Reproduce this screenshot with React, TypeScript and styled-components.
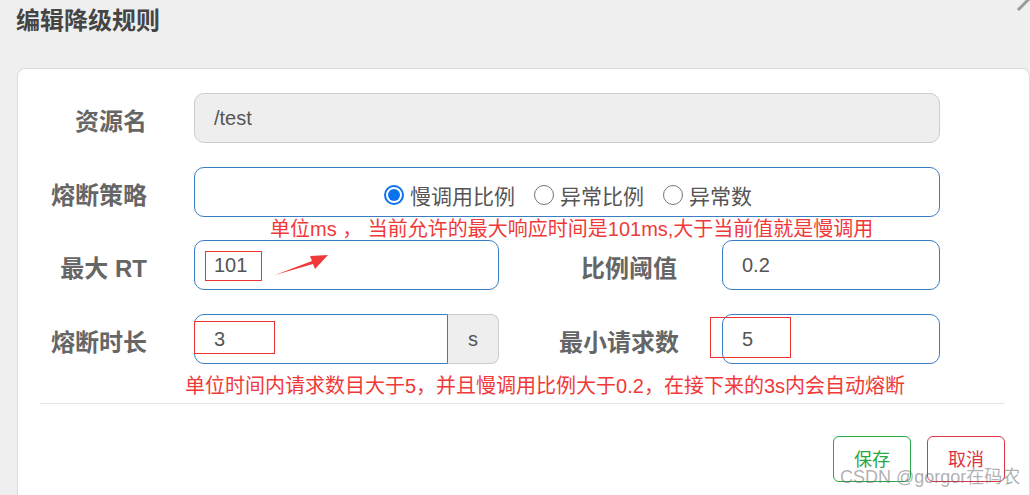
import React from "react";
import styled, { createGlobalStyle } from "styled-components";

const GlobalStyle = createGlobalStyle`
  html, body {
    margin: 0;
    padding: 0;
    background: #efefef;
    font-family: "Liberation Sans", "Noto Sans CJK SC", sans-serif;
  }
  * { box-sizing: border-box; }
`;

const Page = styled.div`
  position: relative;
  width: 1030px;
  height: 495px;
  overflow: hidden;
  background: #efefef;
`;

const Header = styled.div`
  height: 68px;
  padding-left: 16px;
`;

const Title = styled.h1`
  margin: 0;
  font-size: 24px;
  line-height: 38px;
  font-weight: 700;
  color: #454545;
  font-family: "Noto Sans CJK SC", sans-serif;
`;

const Close = styled.svg`
  position: absolute;
  right: 0;
  top: 0;
`;

const Card = styled.div`
  margin-left: 17px;
  width: 1013px;
  height: 430px;
  background: #fff;
  border: 1px solid #dcdcdc;
  border-bottom: none;
  border-radius: 8px 8px 0 0;
  padding: 24px 24px 0 22px;
`;

const Row = styled.div<{ $cols: string; $mt?: number }>`
  display: grid;
  grid-template-columns: ${(p) => p.$cols};
  align-items: center;
  height: 50px;
  margin-top: ${(p) => p.$mt ?? 0}px;
`;

const Label = styled.label<{ $pr: number }>`
  text-align: right;
  padding-right: ${(p) => p.$pr}px;
  padding-top: 2px;
  font-size: 24px;
  font-weight: 700;
  color: #666;
  white-space: nowrap;
  font-family: "Liberation Sans", "Noto Sans CJK SC", sans-serif;
`;

const Control = styled.div`
  position: relative;
  height: 50px;
  display: flex;
`;

const Input = styled.input<{ $disabled?: boolean; $grouped?: boolean }>`
  flex: 1;
  min-width: 0;
  height: 50px;
  padding: 0 19px;
  font-size: 20px;
  color: #555;
  font-family: "Liberation Sans", sans-serif;
  background: ${(p) => (p.$disabled ? "#eeeeee" : "#fff")};
  border: 1px solid ${(p) => (p.$disabled ? "#cccccc" : "#3a7ec2")};
  border-radius: ${(p) => (p.$grouped ? "10px 0 0 10px" : "10px")};
  outline: none;
`;

const Addon = styled.span`
  width: 51px;
  height: 50px;
  display: flex;
  align-items: center;
  justify-content: center;
  background: #eeeeee;
  border: 1px solid #cccccc;
  border-left: none;
  border-radius: 0 8px 8px 0;
  font-size: 20px;
  color: #555;
`;

const RadioBox = styled.div`
  height: 50px;
  border: 1px solid #3a7ec2;
  border-radius: 10px;
  display: flex;
  align-items: center;
  justify-content: center;
  gap: 19px;
  padding-left: 2px;
  padding-top: 6px;
`;

const RadioItem = styled.label`
  display: flex;
  align-items: center;
  gap: 6px;
  font-size: 21px;
  color: #555;
  font-family: "Noto Sans CJK SC", sans-serif;
`;

const RadioDot = styled.span<{ $checked?: boolean }>`
  width: 20px;
  height: 20px;
  border-radius: 50%;
  border: ${(p) => (p.$checked ? "2px solid #0b72ee" : "1px solid #767676")};
  background: #fff;
  display: flex;
  align-items: center;
  justify-content: center;
  &::after {
    content: "";
    display: ${(p) => (p.$checked ? "block" : "none")};
    width: 12px;
    height: 12px;
    border-radius: 50%;
    background: #0b72ee;
  }
`;

const Note = styled.div<{ $pl: number; $size: number; $lh: number; $pt?: number }>`
  padding-left: ${(p) => p.$pl}px;
  padding-top: ${(p) => p.$pt ?? 0}px;
  font-size: ${(p) => p.$size}px;
  line-height: ${(p) => p.$lh}px;
  color: #f03a3a;
  white-space: nowrap;
  font-family: "Liberation Sans", "Noto Sans CJK SC", sans-serif;
`;

const Highlight = styled.span<{ $l: number; $t: number; $w: number; $h: number }>`
  position: absolute;
  left: ${(p) => p.$l}px;
  top: ${(p) => p.$t}px;
  width: ${(p) => p.$w}px;
  height: ${(p) => p.$h}px;
  border: 1px solid #ee3333;
  pointer-events: none;
`;

const Arrow = styled.svg`
  position: absolute;
  left: 78px;
  top: 12px;
`;

const Divider = styled.div`
  margin-top: 7px;
  height: 1px;
  background: #e6e6e6;
`;

const Footer = styled.div`
  display: flex;
  justify-content: flex-end;
  gap: 16px;
  padding-top: 32px;
`;

const Button = styled.button<{ $color: string }>`
  width: 78px;
  height: 46px;
  background: #fff;
  border: 1px solid ${(p) => p.$color};
  border-radius: 6px;
  color: ${(p) => p.$color};
  font-size: 18px;
  font-family: "Noto Sans CJK SC", sans-serif;
  padding: 0 0 2px;
`;

const Watermark = styled.div`
  position: absolute;
  left: 840px;
  top: 465px;
  font-size: 18px;
  line-height: 24px;
  color: rgba(110, 110, 110, 0.55);
  white-space: nowrap;
  font-family: "Liberation Sans", "Noto Sans CJK SC", sans-serif;
`;

export default function App() {
  return (
    <Page>
      <GlobalStyle />
      <Header>
        <Title>编辑降级规则</Title>
      </Header>
      <Close width="16" height="12" viewBox="0 0 16 12">
        <path d="M4 10 L28 -14 M4 -16 L28 8" stroke="#9a9a9a" strokeWidth="3" />
      </Close>
      <Card>
        <Row $cols="154px 746px">
          <Label $pr={47}>资源名</Label>
          <Control>
            <Input $disabled readOnly value="/test" />
          </Control>
        </Row>
        <Row $cols="154px 746px" $mt={24}>
          <Label $pr={47}>熔断策略</Label>
          <RadioBox>
            <RadioItem>
              <RadioDot $checked />
              慢调用比例
            </RadioItem>
            <RadioItem>
              <RadioDot />
              异常比例
            </RadioItem>
            <RadioItem>
              <RadioDot />
              异常数
            </RadioItem>
          </RadioBox>
        </Row>
        <Note $pl={230} $size={20} $lh={22} $pt={1}>
          单位ms ， 当前允许的最大响应时间是101ms,大于当前值就是慢调用
        </Note>
        <Row $cols="154px 305px 223px 218px">
          <Label $pr={47}>最大 RT</Label>
          <Control>
            <Input readOnly value="101" />
            <Highlight $l={11} $t={11} $w={57} $h={30} />
            <Arrow width="60" height="30" viewBox="0 0 60 30">
              <polygon points="3,23 41,12 43,17 56,3 38,4 40,9" fill="#f03a3a" />
            </Arrow>
          </Control>
          <Label $pr={45}>比例阈值</Label>
          <Control>
            <Input readOnly value="0.2" />
          </Control>
        </Row>
        <Row $cols="154px 305px 223px 218px" $mt={24}>
          <Label $pr={47}>熔断时长</Label>
          <Control>
            <Input $grouped readOnly value="3" />
            <Addon>s</Addon>
            <Highlight $l={0} $t={7} $w={81} $h={33} />
          </Control>
          <Label $pr={43}>最小请求数</Label>
          <Control>
            <Input readOnly value="5" />
            <Highlight $l={-12} $t={3} $w={81} $h={41} />
          </Control>
        </Row>
        <Note $pl={145} $size={20} $lh={20} $pt={12}>
          单位时间内请求数目大于5，并且慢调用比例大于0.2，在接下来的3s内会自动熔断
        </Note>
        <Divider />
        <Footer>
          <Button $color="#28a745">保存</Button>
          <Button $color="#dc3545">取消</Button>
        </Footer>
      </Card>
      <Watermark>CSDN @gorgor在码农</Watermark>
    </Page>
  );
}
